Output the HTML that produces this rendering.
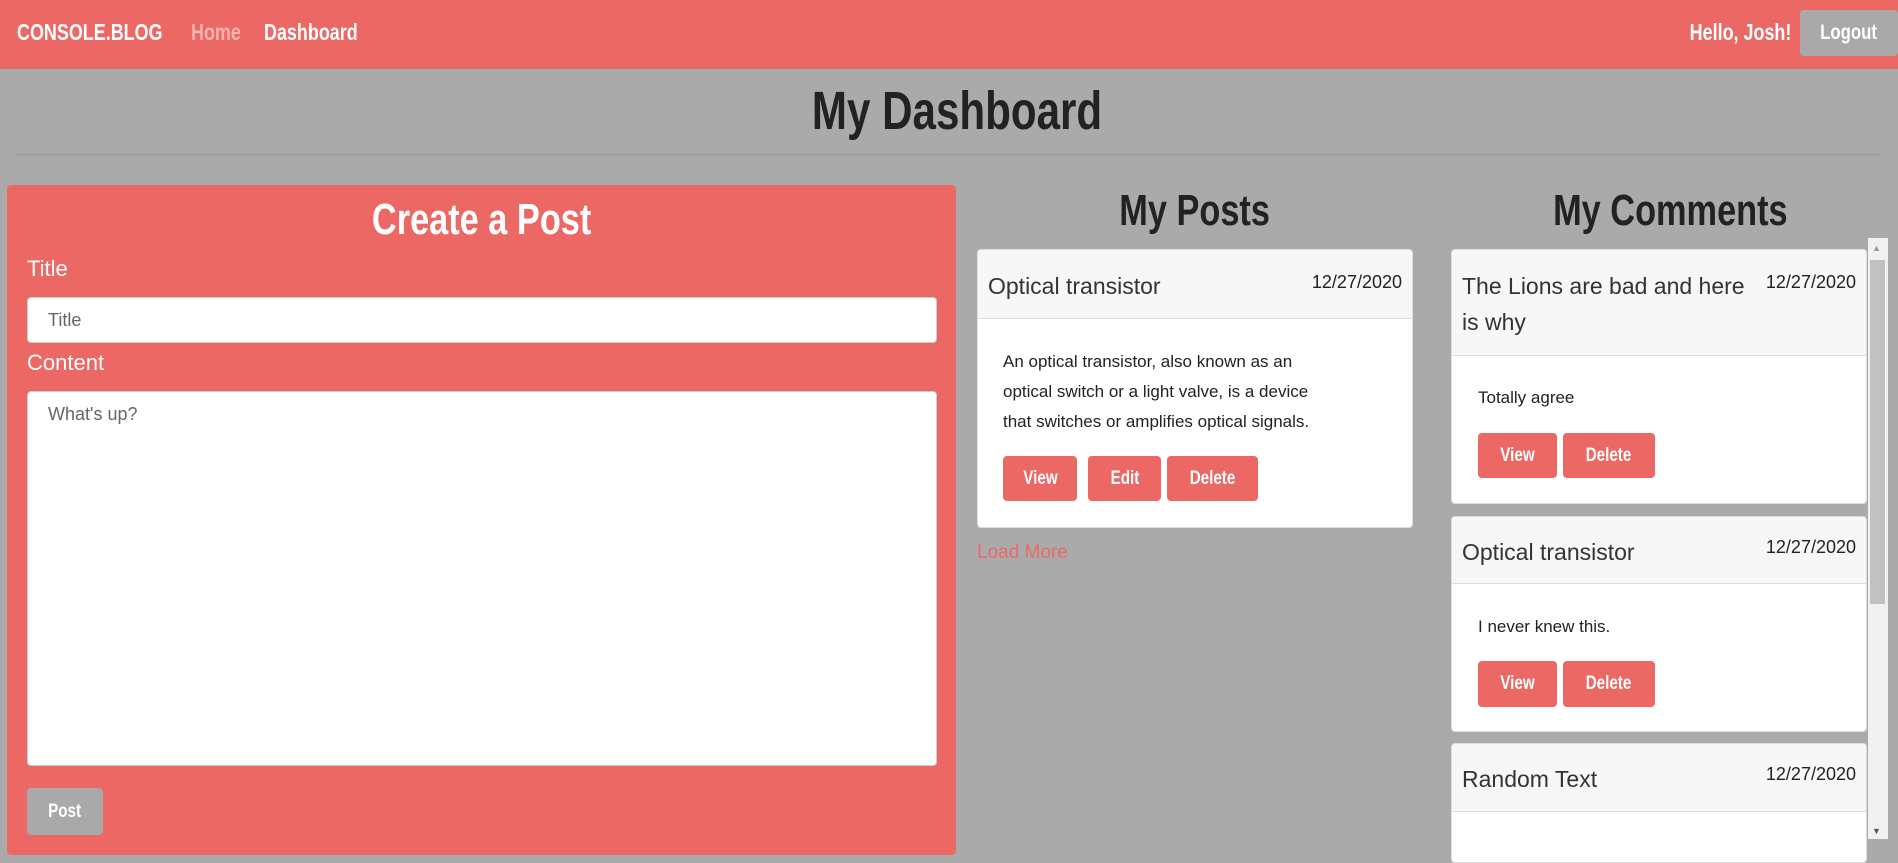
<!DOCTYPE html>
<html><head><meta charset="utf-8"><style>
*{box-sizing:border-box;margin:0;padding:0}
body{width:1898px;height:839px;overflow:hidden;background:#aaaaaa;font-family:"Liberation Sans",sans-serif;position:relative;color:#212529}
.a{position:absolute}
.n{display:inline-block;transform:scaleX(0.78);font-weight:bold;white-space:nowrap}
.l{transform-origin:left center}
.r{transform-origin:right center}
.c{transform-origin:center center}
.nav{left:0;top:0;width:1898px;height:69px;background:#ec6865}
.btn{position:absolute;background:#ec6865;color:#fff;border-radius:4px;font-weight:bold;font-size:19px;display:flex;align-items:center;justify-content:center}
.btn span{display:inline-block;transform:scaleX(0.8)}
.card{position:absolute;background:#fff;border-radius:4px;overflow:hidden;border:1px solid #ddd}
.hd{position:absolute;left:0;top:0;right:0;background:#f7f7f7;border-bottom:1px solid #ddd}
.t{position:absolute;font-size:23px;color:#333;line-height:36px}
.d{position:absolute;right:10px;font-size:18px;color:#222}
.bt{position:absolute;font-size:17px;color:#222;line-height:30px}
</style></head><body>
<div class="a nav"></div>
<div class="a" style="left:17px;top:19px;font-size:23px;color:#fff"><span class="n l">CONSOLE.BLOG</span></div>
<div class="a" style="left:191px;top:19px;font-size:23px;color:#f6b3b1"><span class="n l">Home</span></div>
<div class="a" style="left:264px;top:19px;font-size:23px;color:#fff"><span class="n l">Dashboard</span></div>
<div class="a" style="right:107px;top:19px;font-size:23px;color:#fff"><span class="n r">Hello, Josh!</span></div>
<div class="btn" style="left:1800px;top:10px;width:98px;height:46px;background:#a9a9a9;font-size:21px"><span>Logout</span></div>
<div class="a" style="left:0;width:1914px;text-align:center;top:80px;font-size:54px;color:#222"><span class="n c">My Dashboard</span></div>
<div class="a" style="left:16px;top:154px;width:1866px;height:1px;background:#999"></div>

<div class="a" style="left:7px;top:185px;width:949px;height:670px;background:#ec6865;border-radius:4px"></div>
<div class="a" style="left:7px;width:949px;text-align:center;top:195px;font-size:44px;color:#fff"><span class="n c">Create a Post</span></div>
<div class="a" style="left:27px;top:256px;font-size:22px;color:#fff">Title</div>
<div class="a" style="left:27px;top:297px;width:910px;height:46px;background:#fff;border-radius:4px;border:1px solid #ccc;font-size:18px;color:#666;padding:12px 20px">Title</div>
<div class="a" style="left:27px;top:350px;font-size:22px;color:#fff">Content</div>
<div class="a" style="left:27px;top:391px;width:910px;height:375px;background:#fff;border-radius:4px;border:1px solid #ccc;font-size:18px;color:#666;padding:12px 20px">What's up?</div>
<div class="btn" style="left:27px;top:788px;width:76px;height:47px;background:#a9a9a9"><span>Post</span></div>

<div class="a" style="left:977px;width:436px;text-align:center;top:186px;font-size:44px;color:#222"><span class="n c">My Posts</span></div>
<div class="card" style="left:977px;top:249px;width:436px;height:279px">
 <div class="hd" style="height:69px"></div>
 <div class="t" style="left:10px;top:18px">Optical transistor</div>
 <div class="d" style="top:22px">12/27/2020</div>
 <div class="bt" style="left:25px;top:97px;white-space:nowrap">An optical transistor, also known as an<br>optical switch or a light valve, is a device<br>that switches or amplifies optical signals.</div>
 <div class="btn" style="left:25px;top:206px;width:74px;height:45px"><span>View</span></div>
 <div class="btn" style="left:110px;top:206px;width:73px;height:45px"><span>Edit</span></div>
 <div class="btn" style="left:189px;top:206px;width:91px;height:45px"><span>Delete</span></div>
</div>
<div class="a" style="left:977px;top:542px;font-size:19px;color:#ec6865">Load More</div>

<div class="a" style="left:1451px;width:438px;text-align:center;top:186px;font-size:44px;color:#222"><span class="n c">My Comments</span></div>
<div class="a" style="left:1868px;top:238px;width:20px;height:601px;background:#f1f1f1"></div>
<div class="a" style="left:1870px;top:260px;width:15px;height:344px;background:#c1c1c1"></div>
<div class="a" style="left:1872px;top:243px;font-size:9px;color:#999">▲</div>
<div class="a" style="left:1872px;top:826px;font-size:9px;color:#555">▼</div>

<div class="card" style="left:1451px;top:249px;width:416px;height:255px">
 <div class="hd" style="height:106px"></div>
 <div class="t" style="left:10px;top:18px;width:300px">The Lions are bad and here is why</div>
 <div class="d" style="top:22px">12/27/2020</div>
 <div class="bt" style="left:26px;top:133px">Totally agree</div>
 <div class="btn" style="left:26px;top:183px;width:79px;height:45px"><span>View</span></div>
 <div class="btn" style="left:111px;top:183px;width:92px;height:45px"><span>Delete</span></div>
</div>
<div class="card" style="left:1451px;top:516px;width:416px;height:216px">
 <div class="hd" style="height:67px"></div>
 <div class="t" style="left:10px;top:17px">Optical transistor</div>
 <div class="d" style="top:20px">12/27/2020</div>
 <div class="bt" style="left:26px;top:95px">I never knew this.</div>
 <div class="btn" style="left:26px;top:144px;width:79px;height:46px"><span>View</span></div>
 <div class="btn" style="left:111px;top:144px;width:92px;height:46px"><span>Delete</span></div>
</div>
<div class="card" style="left:1451px;top:743px;width:416px;height:120px">
 <div class="hd" style="height:68px"></div>
 <div class="t" style="left:10px;top:17px">Random Text</div>
 <div class="d" style="top:20px">12/27/2020</div>
</div>
</body></html>
